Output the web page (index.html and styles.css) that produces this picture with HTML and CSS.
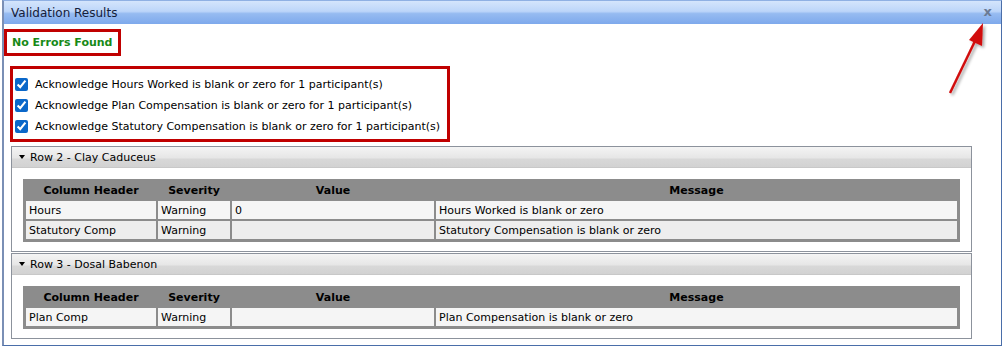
FILE: index.html
```html
<!DOCTYPE html>
<html lang="en">
<head>
    <meta charset="UTF-8">
    <title>Validation Results</title>
    <link rel="stylesheet" href="styles.css">
</head>
<body>
    <div class="dialog">
        <div class="titlebar">
            <span class="title">Validation Results</span>
            <span class="close">x</span>
        </div>
        <div class="content">
            <div class="status">No Errors Found</div>

            <div class="acks">
                <label class="ack"><input type="checkbox" checked> Acknowledge Hours Worked is blank or zero for 1 participant(s)</label>
                <label class="ack"><input type="checkbox" checked> Acknowledge Plan Compensation is blank or zero for 1 participant(s)</label>
                <label class="ack"><input type="checkbox" checked> Acknowledge Statutory Compensation is blank or zero for 1 participant(s)</label>
            </div>

            <div class="panel">
                <div class="panel-head"><span class="caret"></span>Row 2 - Clay Caduceus</div>
                <div class="panel-body">
                    <table class="grid">
                        <tr>
                            <th class="c1">Column Header</th>
                            <th class="c2">Severity</th>
                            <th class="c3">Value</th>
                            <th>Message</th>
                        </tr>
                        <tr class="odd">
                            <td>Hours</td>
                            <td>Warning</td>
                            <td>0</td>
                            <td>Hours Worked is blank or zero</td>
                        </tr>
                        <tr class="even">
                            <td>Statutory Comp</td>
                            <td>Warning</td>
                            <td></td>
                            <td>Statutory Compensation is blank or zero</td>
                        </tr>
                    </table>
                </div>
            </div>

            <div class="panel">
                <div class="panel-head"><span class="caret"></span>Row 3 - Dosal Babenon</div>
                <div class="panel-body">
                    <table class="grid">
                        <tr>
                            <th class="c1">Column Header</th>
                            <th class="c2">Severity</th>
                            <th class="c3">Value</th>
                            <th>Message</th>
                        </tr>
                        <tr class="odd">
                            <td>Plan Comp</td>
                            <td>Warning</td>
                            <td></td>
                            <td>Plan Compensation is blank or zero</td>
                        </tr>
                    </table>
                </div>
            </div>
        </div>

        <!-- annotation arrow pointing at the close button -->
        <svg class="arrow" width="60" height="90" viewBox="0 0 60 90">
            <defs>
                <filter id="shadow" x="-50%" y="-50%" width="200%" height="200%">
                    <feDropShadow dx="2" dy="2" stdDeviation="1.5" flood-color="#000" flood-opacity="0.35"/>
                </filter>
            </defs>
            <g filter="url(#shadow)">
                <line x1="8" y1="80" x2="34" y2="26" stroke="#d10c0c" stroke-width="2.5"/>
                <polygon points="41,10 40,33 27,27" fill="#d10c0c"/>
            </g>
        </svg>
    </div>
</body>
</html>
```

FILE: styles.css
```css
body {
    margin: 0;
    font-family: "DejaVu Sans", Verdana, sans-serif;
    font-size: 11px;
    color: #000;
    background-color: #fff;
}

.dialog {
    position: relative;
    margin-left: 2px;
    width: 1000px;
    height: 346px;
    box-sizing: border-box;
    border: 1px solid #4a6ea9;
    border-top-color: #8fb0e3;
    border-left-width: 2px;
    border-left-color: #7a8fb5;
}

.titlebar {
    display: flex;
    justify-content: space-between;
    align-items: center;
    height: 23px;
    padding: 0 9px 0 7px;
    background: linear-gradient(#d4e5fc 0%, #bcd5f9 45%, #96bbf1 55%, #7ea9ec 100%);
}

.title {
    font-size: 12px;
    color: #15203a;
}

.close {
    font-size: 13px;
    font-weight: bold;
    color: #6b7a94;
    margin-top: -2px;
}

.content {
    padding: 5px 0 0 0;
}

.status {
    display: inline-block;
    border: 3px solid #c00000;
    padding: 4px 6px 4px 5px;
    color: #178a17;
    font-weight: bold;
}

.acks {
    display: flex;
    flex-direction: column;
    width: 440px;
    box-sizing: border-box;
    margin: 10px 0 0 6px;
    border: 3px solid #c00000;
    padding: 5px 0 2px 2px;
}

.ack {
    display: flex;
    align-items: center;
    height: 21px;
    white-space: nowrap;
}

.ack input {
    width: 13px;
    height: 13px;
    margin: 0 7px 0 0;
    accent-color: #0a67c9;
}

.panel {
    margin: 4px 0 0 7px;
    width: 961px;
    box-sizing: border-box;
    border: 1px solid #8c929c;
}

.panel + .panel {
    margin-top: 1px;
}

.panel-head {
    display: flex;
    align-items: center;
    height: 20px;
    padding-left: 7px;
    background: linear-gradient(#f4f4f4 0%, #e6e6e6 55%, #d8d8d8 60%, #d2d2d2 100%);
    border-bottom: 1px solid #c8c8c8;
}

.caret {
    width: 0;
    height: 0;
    border-left: 3px solid transparent;
    border-right: 3px solid transparent;
    border-top: 4px solid #000;
    margin-right: 5px;
}

.panel-body {
    padding: 11px 11px 9px 11px;
}

.grid {
    width: 100%;
    table-layout: fixed;
    border-collapse: separate;
    border-spacing: 2px;
    background-color: #8c8c8c;
    padding: 1px;
}

.grid th {
    height: 17px;
    padding: 0;
    font-weight: bold;
    color: #000;
    background-color: #8c8c8c;
}

.grid td {
    height: 18px;
    padding: 0 3px;
    white-space: nowrap;
}

.grid .c1 { width: 130px; }
.grid .c2 { width: 72px; }
.grid .c3 { width: 202px; }

.grid .odd td { background-color: #f5f5f5; }
.grid .even td { background-color: #eeeeee; }

.arrow {
    position: absolute;
    left: 938px;
    top: 12px;
}
```
